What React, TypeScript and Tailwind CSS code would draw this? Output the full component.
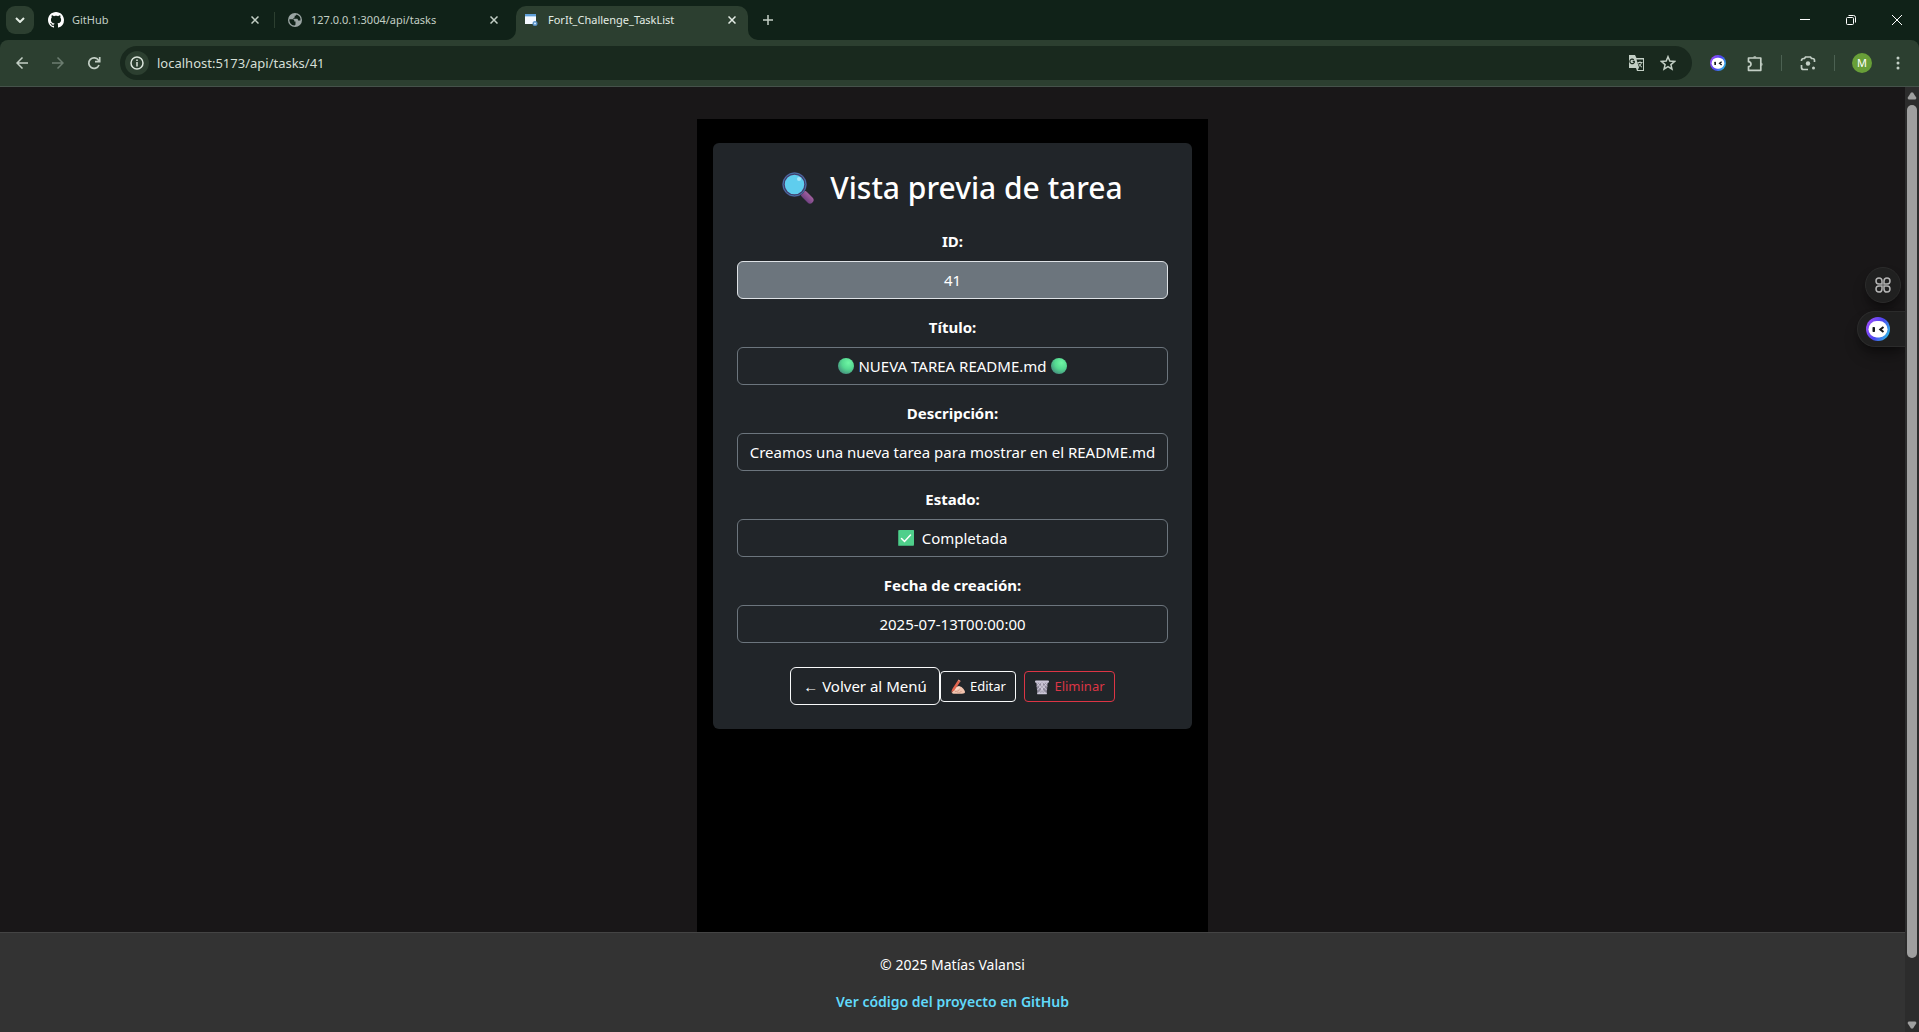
import type { ReactNode } from 'react';

function GitHubMark() {
  return (
    <svg viewBox="0 0 16 16" className="size-4 shrink-0" fill="#ffffff" aria-hidden="true">
      <path d="M8 0C3.58 0 0 3.58 0 8c0 3.54 2.29 6.53 5.47 7.59.4.07.55-.17.55-.38 0-.19-.01-.82-.01-1.49-2.01.37-2.53-.49-2.69-.94-.09-.23-.48-.94-.82-1.13-.28-.15-.68-.52-.01-.53.63-.01 1.08.58 1.23.82.72 1.21 1.87.87 2.33.66.07-.52.28-.87.51-1.07-1.78-.2-3.64-.89-3.64-3.95 0-.87.31-1.59.82-2.15-.08-.2-.36-1.02.08-2.12 0 0 .67-.21 2.2.82.64-.18 1.32-.27 2-.27s1.36.09 2 .27c1.53-1.04 2.2-.82 2.2-.82.44 1.1.16 1.92.08 2.12.51.56.82 1.27.82 2.15 0 3.07-1.87 3.75-3.65 3.95.29.25.54.73.54 1.48 0 1.07-.01 1.93-.01 2.2 0 .21.15.46.55.38A8.01 8.01 0 0 0 16 8c0-4.42-3.58-8-8-8z" />
    </svg>
  );
}

function GlobeIcon() {
  return (
    <svg viewBox="0 0 16 16" className="size-4 shrink-0" aria-hidden="true">
      <circle cx="8" cy="8" r="7" fill="#9aa5a3" />
      <path d="M2.4 7.2h3.100c1.100 0 1.800.7 1.800 1.600v.7h1.200v2.900c-.2.700-.7 1.100-1.300 1.200C4.300 13.100 2 10.500 2.400 7.200z" fill="#102218" />
      <path d="M9.500 2.500c-.2 1-.8 1.300-1.800 1.300v1.500c-.5.8-1.500.6-1.700 1.400h3.700c1 0 1.300.7 1.300 1.700h2.400c.6-2.600-1-5-3.900-5.900z" fill="#102218" />
    </svg>
  );
}

function WindowIcon() {
  return (
    <svg viewBox="0 0 16 16" className="size-4 shrink-0" aria-hidden="true">
      <rect x="1" y="2" width="11" height="10" fill="#f4f9ff" />
      <rect x="1" y="2" width="11" height="2" fill="#5f9fd8" />
      <rect x="1" y="4" width="11" height="1" fill="#b9d8f2" />
      <circle cx="11" cy="11.500" r="2.500" fill="#5b93c7" />
      <circle cx="11" cy="11.500" r="1" fill="#d7ecff" />
    </svg>
  );
}

function CloseIcon({ color }: { color: string }) {
  return (
    <svg viewBox="0 0 8 8" className="size-2" stroke={color} strokeWidth="1.500" aria-hidden="true">
      <path d="M.5.5l7 7M7.500.5l-7 7" />
    </svg>
  );
}

function BotLogo({ className }: { className: string }) {
  return (
    <svg viewBox="0 0 24 24" className={className} aria-hidden="true">
      <defs>
        <linearGradient id="bot-ring" x1="0" y1="0.3" x2="1" y2="0.8">
          <stop offset="0" stopColor="#9a4dfb" />
          <stop offset="0.500" stopColor="#4b45f0" />
          <stop offset="1" stopColor="#2bc4e6" />
        </linearGradient>
      </defs>
      <circle cx="12" cy="12" r="12" fill="url(#bot-ring)" />
      <rect x="2.500" y="4" width="19" height="16.500" rx="8.200" fill="#ffffff" />
      <rect x="6.500" y="10" width="2.500" height="5" rx="0.800" fill="#15181c" />
      <path d="M17.500 10l-3.200 2.500 3.200 2.500" fill="none" stroke="#15181c" strokeWidth="2" />
    </svg>
  );
}

function MagnifierEmoji() {
  return (
    <svg viewBox="0 0 32 32" className="size-8 shrink-0" aria-hidden="true">
      <defs>
        <linearGradient id="lens-handle" x1="0" y1="1" x2="1" y2="0">
          <stop offset="0" stopColor="#6d3f80" />
          <stop offset="1" stopColor="#a3619f" />
        </linearGradient>
      </defs>
      <path d="M19 19l4 4" stroke="#55406f" strokeWidth="3" />
      <path d="M22.500 22.500l5.500 5.500" stroke="url(#lens-handle)" strokeWidth="7" strokeLinecap="round" />
      <circle cx="12.500" cy="12.500" r="11" fill="#5fcdee" stroke="#433b6b" strokeWidth="2.500" />
      <circle cx="12.500" cy="12.500" r="11.500" fill="none" stroke="#4777a8" strokeWidth="1" />
      <circle cx="17" cy="7" r="2" fill="#a5e6fa" />
    </svg>
  );
}

function GreenCircleEmoji() {
  return (
    <svg viewBox="0 0 16 16" className="size-4 shrink-0" aria-hidden="true">
      <defs>
        <radialGradient id="green-ball" cx="0.650" cy="0.300" r="0.800">
          <stop offset="0" stopColor="#6ff5a4" />
          <stop offset="0.500" stopColor="#54d890" />
          <stop offset="1" stopColor="#43877c" />
        </radialGradient>
      </defs>
      <circle cx="8" cy="8" r="8" fill="url(#green-ball)" />
    </svg>
  );
}

function CheckEmoji() {
  return (
    <svg viewBox="0 0 16 16" className="size-4 shrink-0" aria-hidden="true">
      <rect width="16" height="16" rx="1" fill="#3fa672" />
      <rect x="1" width="15" height="15" rx="1" fill="#4fcf8b" />
      <path d="M3.500 8.500l3 3 6-6.500" fill="none" stroke="#ffffff" strokeWidth="1.500" strokeLinecap="round" />
    </svg>
  );
}

function WritingHandEmoji() {
  return (
    <svg viewBox="0 0 16 16" className="size-4 shrink-0" aria-hidden="true">
      <path d="M2 13.500C2.500 11 4.500 8.500 7.500 7.500c2-.600 3.500 0 4.800 1.200 1.500 1.300 2.700 3 2.700 4.300 0 1.300-1 1.700-3 1.700H4.500c-1.500 0-2.700-.200-2.500-1.200z" fill="#f1c3ae" />
      <path d="M4 10.500c1.500-2 3.500-3.200 5.300-2.900 1 .3.700 1.400-.300 1.900L6 11.200z" fill="#fbdccb" />
      <path d="M1 13.500L2.300 10 7.800 1.600 10 3 4.300 11.500z" fill="#e2654f" />
      <path d="M7.800 1.600l.7-1 2.200 1.400L10 3z" fill="#f79a85" />
      <path d="M.7 14.300L1.500 12l1.200.8z" fill="#5c4038" />
      <path d="M5 12.500c2 .2 3.500-.500 4.500-2M7 14c2 .1 3.500-.500 4.500-2" fill="none" stroke="#cf9681" strokeWidth="0.800" />
    </svg>
  );
}

function TrashEmoji() {
  return (
    <svg viewBox="0 0 16 16" className="size-4 shrink-0" aria-hidden="true">
      <path d="M2 2.500h12L12.500 15h-9z" fill="#8f8a9c" />
      <path d="M3 4l8.500 10.500M6 3l6.500 8M9.500 3l3.500 4.500M13 4L4.500 14.500M10 3l-6.500 8M6.500 3L3 7.500M8 4v11" stroke="#d5d0e0" strokeWidth="0.900" />
      <rect x="1" y="1.500" width="14" height="2.200" rx="1" fill="#cbc6d8" />
      <rect x="3.200" y="13.500" width="9.600" height="1.800" rx="0.500" fill="#cbc6d8" />
    </svg>
  );
}

function InactiveTab({ icon, title }: { icon: ReactNode; title: string }) {
  return (
    <div className="flex h-7 w-[215px] items-center text-[#c3cfc5]">
      {icon}
      <span className="ml-2 flex-1 truncate text-[11px]">{title}</span>
      <button type="button" aria-label={`Cerrar ${title}`} className="flex size-4 items-center justify-center">
        <CloseIcon color="#c3cfc5" />
      </button>
    </div>
  );
}

function TabStrip() {
  return (
    <div className="flex h-10 shrink-0 items-end bg-[#102218]">
      <button
        type="button"
        aria-label="Buscar pestañas"
        className="mb-[6px] ml-[6px] flex size-7 items-center justify-center rounded-[9px] bg-[#2c3f30]"
      >
        <svg viewBox="0 0 10 6" className="h-[6px] w-[10px]" fill="none" stroke="#e3ece4" strokeWidth="2" aria-hidden="true">
          <path d="M1 1l4 4 4-4" />
        </svg>
      </button>
      <div className="mb-[6px] ml-[14px] flex items-center">
        <InactiveTab icon={<GitHubMark />} title="GitHub" />
        <div className="ml-[11px] mr-3 h-4 w-px bg-[#2c3f30]" />
        <InactiveTab icon={<GlobeIcon />} title="127.0.0.1:3004/api/tasks" />
      </div>
      <svg viewBox="0 0 10 10" className="ml-1 size-[10px]" fill="#2c3f30" aria-hidden="true">
        <path d="M10 0v10H0A10 10 0 0 0 10 0z" />
      </svg>
      <div className="flex h-[34px] w-[232px] items-center rounded-t-[10px] bg-[#2c3f30] px-2 pb-[6px] text-[#e3ece4]">
        <WindowIcon />
        <span className="ml-2 flex-1 truncate text-[11px]">ForIt_Challenge_TaskList</span>
        <button type="button" aria-label="Cerrar pestaña actual" className="flex size-4 items-center justify-center">
          <CloseIcon color="#e3ece4" />
        </button>
      </div>
      <svg viewBox="0 0 10 10" className="size-[10px]" fill="#2c3f30" aria-hidden="true">
        <path d="M0 0v10h10A10 10 0 0 1 0 0z" />
      </svg>
      <button type="button" aria-label="Nueva pestaña" className="mb-3 ml-0.5 flex size-4 items-center justify-center">
        <svg viewBox="0 0 10 10" className="size-[10px]" stroke="#c3cfc5" strokeWidth="1.500" aria-hidden="true">
          <path d="M5 0v10M0 5h10" />
        </svg>
      </button>
      <div className="ml-auto flex h-10 text-white">
        <button type="button" aria-label="Minimizar" className="flex w-[46px] items-center justify-center">
          <svg viewBox="0 0 10 10" className="size-[10px]" stroke="currentColor" aria-hidden="true">
            <path d="M0 4.500h10" />
          </svg>
        </button>
        <button type="button" aria-label="Restaurar" className="flex w-[46px] items-center justify-center">
          <svg viewBox="0 0 10 10" className="size-[10px]" fill="none" stroke="currentColor" aria-hidden="true">
            <rect x="0.500" y="2.500" width="7" height="7" rx="1" />
            <path d="M2.500.5h5a2 2 0 0 1 2 2v5" />
          </svg>
        </button>
        <button type="button" aria-label="Cerrar ventana" className="flex w-[45px] items-center justify-center">
          <svg viewBox="0 0 10 10" className="size-[10px]" stroke="currentColor" aria-hidden="true">
            <path d="M0 0l10 10M10 0L0 10" />
          </svg>
        </button>
      </div>
    </div>
  );
}

function ToolButton({ label, children }: { label: string; children: ReactNode }) {
  return (
    <button type="button" aria-label={label} className="flex size-8 shrink-0 items-center justify-center">
      {children}
    </button>
  );
}

function Toolbar() {
  return (
    <div className="shrink-0 bg-[#102218]">
      <div className="flex h-[47px] items-center rounded-t-[8px] border-b border-[#45524a] bg-[#2c3f30] pl-[6px] text-[#c3cfc5]">
        <ToolButton label="Atrás">
          <svg viewBox="0 0 12 12" className="size-3" fill="none" stroke="currentColor" strokeWidth="1.500" aria-hidden="true">
            <path d="M12 6H1M6.500.5L1 6l5.500 5.500" />
          </svg>
        </ToolButton>
        <div className="ml-1 flex text-[#6c7d70]">
          <ToolButton label="Adelante">
            <svg viewBox="0 0 12 12" className="size-3" fill="none" stroke="currentColor" strokeWidth="1.500" aria-hidden="true">
              <path d="M0 6h11M5.500.5L11 6l-5.500 5.500" />
            </svg>
          </ToolButton>
        </div>
        <div className="ml-1 flex">
          <ToolButton label="Recargar">
            <svg viewBox="0 0 14 14" className="size-[14px]" fill="none" stroke="currentColor" strokeWidth="1.700" aria-hidden="true">
              <path d="M12 9A5.300 5.300 0 1 1 11.500 4.200L12.500 5.500" />
              <path d="M12.700 1v4.700H8" />
            </svg>
          </ToolButton>
        </div>
        <div className="ml-[10px] flex h-[34px] flex-1 items-center rounded-full bg-[#19291e] pl-[5px] pr-2">
          <button
            type="button"
            aria-label="Información del sitio"
            className="flex size-6 shrink-0 items-center justify-center rounded-full bg-[#2c3f30]"
          >
            <svg viewBox="0 0 14 14" className="size-[14px]" fill="none" stroke="#dbe5dc" strokeWidth="1.500" aria-hidden="true">
              <circle cx="7" cy="7" r="6" />
              <path d="M7 6v4.500M7 3.500V5" />
            </svg>
          </button>
          <input
            aria-label="Barra de direcciones"
            defaultValue="localhost:5173/api/tasks/41"
            className="ml-2 min-w-0 flex-1 bg-transparent text-[13px] leading-5 text-[#d5dfd6] outline-none"
          />
          <ToolButton label="Traducir esta página">
            <svg viewBox="0 0 17 17" className="size-[17px]" aria-hidden="true">
              <path d="M1 0h6l1.500 3H16v13H9l-1-3H1z" fill="#c3cfc5" />
              <path d="M8.500 4.500h6.500V15H9.800L11 12.500z" fill="#19291e" />
              <path d="M6.800 6.300H4.700M6.500 6.400a2.300 2.300 0 1 1-.700-1.700" fill="none" stroke="#19291e" strokeWidth="1.200" />
              <path d="M9.500 7.500h5M12 6.300v1.200M13.500 7.500c-.500 2-1.500 3.200-3 4.500M10.500 8.500c.700 1.500 2 2.700 3.500 3.700" fill="none" stroke="#c3cfc5" />
            </svg>
          </ToolButton>
          <ToolButton label="Añadir a marcadores">
            <svg viewBox="0 0 16 16" className="size-4" fill="none" stroke="currentColor" strokeWidth="1.500" aria-hidden="true">
              <path d="M8 1.700l1.800 4.400 4.700.4-3.600 3.100 1.100 4.600L8 11.700l-4 2.500 1.100-4.600-3.600-3.100 4.700-.4z" />
            </svg>
          </ToolButton>
        </div>
        <div className="ml-[10px] flex items-center">
          <ToolButton label="Asistente">
            <BotLogo className="size-4" />
          </ToolButton>
          <div className="ml-[5px] flex">
            <ToolButton label="Extensiones">
              <svg viewBox="0 0 17 17" className="size-[17px]" fill="none" stroke="currentColor" strokeWidth="1.700" aria-hidden="true">
                <path d="M1.500 3h12.300v12.300H1.500v-3.600a2.300 2.300 0 0 0 0-5z" strokeLinejoin="round" />
                <path d="M6 2.500a1.900 1.900 0 0 1 3.600 0zM14.300 7.500a1.900 1.900 0 0 1 0 3.600z" fill="currentColor" stroke="none" />
              </svg>
            </ToolButton>
          </div>
          <div className="ml-[10px] h-4 w-px bg-[#4c6152]" />
          <div className="ml-[10px] flex">
            <ToolButton label="Buscar con Google Lens">
              <svg viewBox="0 0 16 16" className="size-4" fill="none" stroke="currentColor" strokeWidth="1.700" aria-hidden="true">
                <path d="M1.500 6V5.500a2 2 0 0 1 2-2h1L5.500 2h5l1 1.500h1a2 2 0 0 1 2 2V7M1.500 10v2.500a2 2 0 0 0 2 2H8" />
                <circle cx="8" cy="8.500" r="2.200" fill="currentColor" stroke="none" />
                <circle cx="13.500" cy="13" r="1.500" fill="currentColor" stroke="none" />
              </svg>
            </ToolButton>
          </div>
          <div className="ml-[10px] h-4 w-px bg-[#4c6152]" />
          <button
            type="button"
            aria-label="Perfil M"
            className="ml-[17px] flex size-5 items-center justify-center rounded-full bg-[#689f38] text-[11px] text-white"
          >
            M
          </button>
          <div className="ml-[10px] mr-[5px] flex">
            <ToolButton label="Menú">
              <svg viewBox="0 0 4 14" className="h-[14px] w-1" fill="currentColor" aria-hidden="true">
                <circle cx="2" cy="2" r="1.500" />
                <circle cx="2" cy="7" r="1.500" />
                <circle cx="2" cy="12" r="1.500" />
              </svg>
            </ToolButton>
          </div>
        </div>
      </div>
    </div>
  );
}

function Field({ id, label, active, children }: { id: string; label: string; active?: boolean; children: ReactNode }) {
  return (
    <div className="mb-4 flex flex-col">
      <label htmlFor={id} className="mb-2 text-center text-[15px] font-bold leading-6">
        {label}
      </label>
      <output
        id={id}
        className={
          active
            ? 'flex h-[38px] items-center justify-center rounded-md border border-[#dee2e6] bg-[#6c757d] px-3 text-[15px]'
            : 'flex h-[38px] items-center justify-center rounded-md border border-[#6c757d] px-3 text-[15px]'
        }
      >
        {children}
      </output>
    </div>
  );
}

function TaskPreview() {
  return (
    <section className="rounded-md bg-[#212529] p-6">
      <h2 className="mb-5 flex h-[42px] items-center justify-center gap-4 text-[30px] font-medium leading-[42px]">
        <MagnifierEmoji />
        Vista previa de tarea
      </h2>
      <Field id="task-id" label="ID:" active>
        41
      </Field>
      <Field id="task-title" label="Título:">
        <span className="flex items-center gap-1">
          <GreenCircleEmoji />
          NUEVA TAREA README.md
          <GreenCircleEmoji />
        </span>
      </Field>
      <Field id="task-description" label="Descripción:">
        <span className="whitespace-nowrap">Creamos una nueva tarea para mostrar en el README.md</span>
      </Field>
      <Field id="task-status" label="Estado:">
        <span className="flex items-center gap-2">
          <CheckEmoji />
          Completada
        </span>
      </Field>
      <Field id="task-date" label="Fecha de creación:">
        2025-07-13T00:00:00
      </Field>
      <div className="mt-6 flex items-center justify-center">
        <button
          type="button"
          className="flex h-[38px] w-[150px] items-center justify-center whitespace-nowrap rounded-md border border-[#f8f9fa] text-[15px]"
        >
          ← Volver al Menú
        </button>
        <button
          type="button"
          className="flex h-[31px] w-[76px] items-center justify-center gap-1 rounded border border-[#f8f9fa] pt-0.5 text-[13px]"
        >
          <WritingHandEmoji />
          Editar
        </button>
        <button
          type="button"
          className="ml-2 flex h-[31px] w-[91px] items-center justify-center gap-1 rounded border border-[#dc3545] pt-0.5 text-[13px] text-[#dc3545]"
        >
          <TrashEmoji />
          Eliminar
        </button>
      </div>
    </section>
  );
}

function Scrollbar() {
  return (
    <div className="flex w-[14px] shrink-0 flex-col items-center bg-[#2c2c2c] pb-[3px] pt-[5px]" aria-hidden="true">
      <svg viewBox="0 0 10 8" className="h-2 w-[10px]" fill="#9f9f9f">
        <path d="M4 .5h2L9.500 6 8.500 7.500h-7L.5 6z" />
      </svg>
      <div className="mt-[5px] h-[91%] w-[10px] rounded-full bg-[#9f9f9f]" />
      <svg viewBox="0 0 10 8" className="mt-auto h-2 w-[10px]" fill="#9f9f9f">
        <path d="M4 7.500h2L9.500 2 8.500.5h-7L.5 2z" />
      </svg>
    </div>
  );
}

function FloatingTools() {
  return (
    <div className="absolute right-0 top-[180px] flex flex-col items-end gap-2">
      <button
        type="button"
        aria-label="Atajos"
        className="mr-1 flex size-9 items-center justify-center rounded-full border border-[#2b2b2b] bg-[#202020] shadow-lg shadow-black/40"
      >
        <svg viewBox="0 0 16 16" className="size-4" fill="none" stroke="#b5b5b5" strokeWidth="1.500" aria-hidden="true">
          <path d="M7 7H3.900A3 3 0 1 1 7 3.900zM9 7V3.900A3 3 0 1 1 12.100 7zM7 9v3.100A3 3 0 1 1 3.900 9zM9 9h3.100A3 3 0 1 1 9 12.100z" />
        </svg>
      </button>
      <button
        type="button"
        aria-label="Abrir asistente"
        className="flex h-9 w-12 items-center rounded-l-full border-y border-l border-[#2b2b2b] bg-[#202020] pl-2 shadow-lg shadow-black/40"
      >
        <BotLogo className="size-6" />
      </button>
    </div>
  );
}

export default function App() {
  return (
    <div className='flex h-screen flex-col overflow-hidden bg-[#191718] font-["Noto_Sans",sans-serif]'>
      <header className="shrink-0">
        <TabStrip />
        <Toolbar />
      </header>
      <div className="flex min-h-0 flex-1">
        <div className="relative flex min-w-0 flex-1 flex-col overflow-hidden text-white">
          <main className="flex flex-1 justify-center pt-8">
            <div className="w-[511px] bg-black px-4 pt-6">
              <TaskPreview />
            </div>
          </main>
          <footer className="flex flex-col items-center gap-4 border-t border-[#444444] bg-[#333333] pb-5 pt-[21px] text-[14px] leading-[21px]">
            <p>© 2025 Matías Valansi</p>
            <a href="#repositorio" className="font-semibold text-[#61dafb]">
              Ver código del proyecto en GitHub
            </a>
          </footer>
          <FloatingTools />
        </div>
        <Scrollbar />
      </div>
    </div>
  );
}
